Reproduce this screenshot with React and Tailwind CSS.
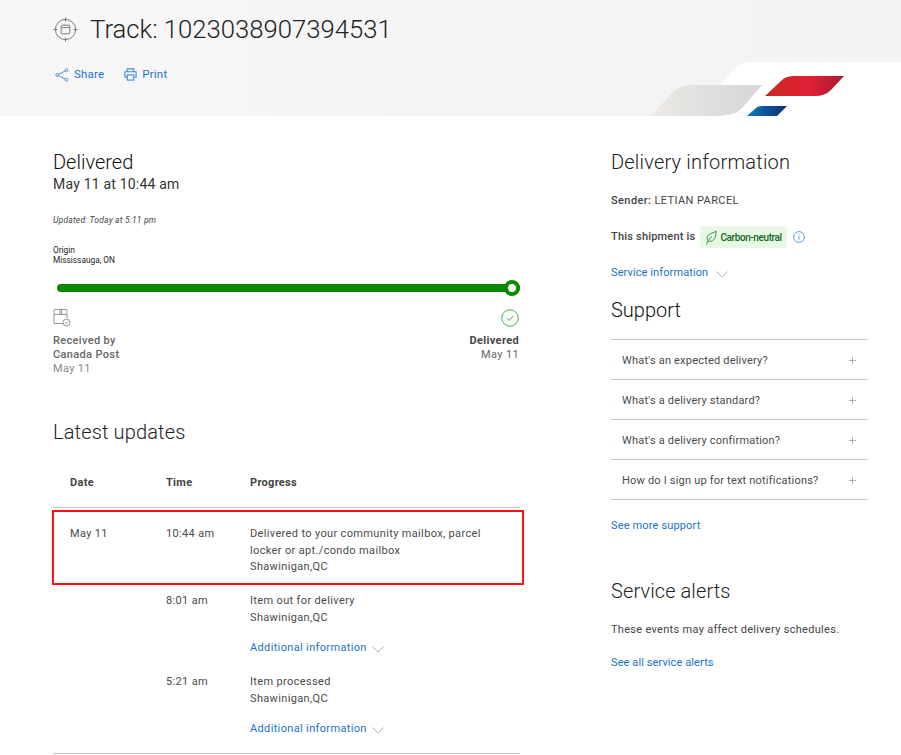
import React from "react";
import { Plus } from "lucide-react";

const blue = "text-[#1a73c9]";

function Logo() {
  return (
    <svg className="absolute right-0 top-0 w-[271px] h-[116px]" viewBox="630 0 271 116">
      <defs>
        <linearGradient id="g" x1="0" x2="1" y1="0" y2="0"><stop offset="0" stopColor="#ece9e6" /><stop offset="1" stopColor="#d6d6d6" /></linearGradient>
        <linearGradient id="r" x1="0" x2="1" y1="0" y2="0"><stop offset="0" stopColor="#c62a1e" /><stop offset="0.55" stopColor="#e21f35" /><stop offset="1" stopColor="#a51d35" /></linearGradient>
        <linearGradient id="b" x1="0" x2="1" y1="0" y2="0"><stop offset="0" stopColor="#0b78c0" /><stop offset="1" stopColor="#0f2f6e" /></linearGradient>
      </defs>
      <path d="M692 116 L731 72 Q740 62 752 62 L901 62 L901 116 Z" fill="#fff" />
      <path d="M650 116 L673 92 Q680 85 690 85 L762 85 L742 108 Q735 115 725 115 L722 116 Z" fill="url(#g)" />
      <path d="M765 96 L781 81 Q785 76 795 76 L844 76 L831 90 Q825 96 815 96 Z" fill="url(#r)" />
      <path d="M747 116 L756 108 Q758 106 762 106 L787 106 L777 116 Z" fill="url(#b)" />
    </svg>
  );
}

function TrackIcon() {
  return (
    <svg width="25" height="25" viewBox="0 0 26 26" fill="none" stroke="#757575" strokeWidth="1">
      <circle cx="13" cy="13" r="10.5" />
      <path d="M13 0.5v4M13 21.5v4M0.5 13h4M21.5 13h4" />
      <rect x="8.5" y="8.5" width="9" height="9" rx="1" />
      <path d="M8.5 11h9" />
    </svg>
  );
}

function ShareIcon() {
  return (
    <svg width="14" height="14" viewBox="0 0 14 14" fill="none" stroke="#4a90d9" strokeWidth="1">
      <circle cx="11.5" cy="2.3" r="1.4" />
      <circle cx="2.3" cy="7" r="1.4" />
      <circle cx="11.5" cy="11.7" r="1.4" />
      <path d="M3.6 6.3l6.7-3.4M3.6 7.7l6.7 3.4" />
    </svg>
  );
}

function PrintIcon() {
  return (
    <svg width="13" height="13" viewBox="0 0 14 14" fill="none" stroke="#3d8ad6" strokeWidth="1.2">
      <path d="M3.5 4V1h7v3" />
      <path d="M3.5 10H1V4h12v6h-2.5" />
      <rect x="3.5" y="7.5" width="7" height="5.5" />
    </svg>
  );
}

function BoxIcon() {
  return (
    <svg width="18" height="18" viewBox="0 0 18 18" fill="none" stroke="#8a8a8a" strokeWidth="0.9" className="overflow-visible">
      <path d="M10 14.5H1V1.5a1 1 0 0 1 1-1h11a1 1 0 0 1 1 1V9" />
      <path d="M1 5.5h13M7 .5v5M8.5 .5v5" />
      <circle cx="13.5" cy="13.5" r="3.5" fill="#fff" />
      <path d="M12 13.5l1.2 1.2 2-2.2" />
    </svg>
  );
}

function CheckCircle() {
  return (
    <svg width="18" height="18" viewBox="0 0 18 18" fill="none" stroke="#4caf50" strokeWidth="1">
      <circle cx="9" cy="9" r="8.2" />
      <path d="M6 9.3l2.2 2.2 4-4.5" stroke="#3f9c46" />
    </svg>
  );
}

function Leaf() {
  return (
    <svg width="12" height="15" viewBox="0 0 12 15" fill="none" stroke="#3c8c3c" strokeWidth="1">
      <path d="M11 1C11 8 9 11 4.5 11.5 1.5 11 1.5 7 3.5 5 5.5 3 9 3 11 1Z" />
      <path d="M1.5 14.5C2.5 11 4.5 8.5 7 6.5" />
    </svg>
  );
}

function Info() {
  return (
    <svg width="12" height="12" viewBox="0 0 12 12" fill="none" stroke="#4a90d9" strokeWidth="0.9">
      <circle cx="6" cy="6" r="5.4" />
      <path d="M6 5.2v3.4M6 3.2v1" />
    </svg>
  );
}

function Chev() {
  return (
    <svg width="12" height="7" viewBox="0 0 12 7" fill="none" stroke="#9fb2d2" strokeWidth="1" className="mt-[2px]">
      <path d="M0.5 0.5L6 6l5.5-5.5" />
    </svg>
  );
}

function Row({ date, time, lines, more, highlight }) {
  return (
    <div className={highlight ? "-ml-[1px] -mr-[4px] border-2 border-[#ff1010] flex pt-[14px] h-[75px] mt-[2px]" : "flex h-[81px] pt-[8px]"}>
      <div className={highlight ? "w-[112px] pl-[16px] shrink-0" : "w-[113px] pl-[17px] shrink-0"}>{date}</div>
      <div className="w-[84px] shrink-0">{time}</div>
      <div className="flex-1">
        {lines.map((l) => (
          <div key={l} className="h-[16.5px] leading-[16.5px]">{l}</div>
        ))}
        {more && (
          <div className={`mt-[14px] flex items-center gap-[5px] ${blue} leading-[16px]`}>
            Additional information
            <Chev />
          </div>
        )}
      </div>
    </div>
  );
}

function Faq({ q }) {
  return (
    <div className="h-[40px] border-b border-[#c8c8c8] flex items-center justify-between pl-[11px] pr-[10px] text-[11px] tracking-[0.2px] text-[#4a4a4a]">
      <span className="pt-[4px]">{q}</span>
      <Plus size={11} strokeWidth={1} className="text-[#666] mt-[2px]" />
    </div>
  );
}

export default function App() {
  return (
    <div className="w-[901px] h-[755px] overflow-hidden bg-white text-[#333] font-['Roboto',sans-serif]">
      <header className="relative h-[116px] bg-linear-to-r from-[#f7f7f7] to-[#f3f3f3] pl-[53px] pt-[14px] overflow-hidden">
        <Logo />
        <div className="flex items-center gap-[12px]">
          <TrackIcon />
          <h1 className="text-[25.7px] leading-[30px] font-light text-[#222]">Track: 1023038907394531</h1>
        </div>
        <div className={`mt-[22px] ml-[2px] flex items-center text-[11.5px] tracking-[0.2px] ${blue}`}>
          <ShareIcon />
          <span className="ml-[5px] mr-[20px]">Share</span>
          <PrintIcon />
          <span className="ml-[5px]">Print</span>
        </div>
      </header>

      <main className="flex pl-[53px]">
        <section className="w-[467px] shrink-0 pt-[35px]">
          <div className="text-[20px] leading-[23px] font-light text-[#111]">Delivered</div>
          <div className="text-[14px] leading-[20px] tracking-[0.2px] text-[#333]">May 11 at 10:44 am</div>
          <div className="text-[8.5px] italic leading-[10px] mt-[21px] text-[#444] tracking-[0.2px]">Updated: Today at 5:11 pm</div>
          <div className="text-[8.3px] leading-[10px] mt-[20px] text-[#222]">Origin<br />Mississauga, ON</div>
          <div className="relative ml-[4px] mt-[19px] h-[8px] w-[463px] bg-[#0a8a00] rounded-full">
            <div className="absolute right-0 top-[-4px] w-[16px] h-[16px] rounded-full border-[4px] border-[#0a8a00] bg-white" />
          </div>
          <div className="flex justify-between mt-[17px] pr-[1px] text-[11px] leading-[14px] tracking-[0.35px]">
            <div>
              <BoxIcon />
              <div className="mt-[7px] font-medium text-[#666]">Received by<br />Canada Post</div>
              <div className="text-[#888]">May 11</div>
            </div>
            <div className="flex flex-col items-end">
              <CheckCircle />
              <div className="mt-[7px] font-bold text-[#444]">Delivered</div>
              <div className="text-[#666]">May 11</div>
            </div>
          </div>

          <h2 className="mt-[44px] text-[20px] leading-[24px] font-light text-[#222] tracking-[0.15px]">Latest updates</h2>
          <div className="flex mt-[27px] h-[37px] border-b border-[#c8c8c8] text-[11px] font-bold text-[#444] tracking-[0.3px] pt-[5px] leading-[14px]">
            <div className="w-[113px] pl-[17px]">Date</div>
            <div className="w-[84px]">Time</div>
            <div>Progress</div>
          </div>
          <div className="text-[11px] text-[#4a4a4a] tracking-[0.35px]">
            <Row highlight date="May 11" time="10:44 am" lines={["Delivered to your community mailbox, parcel", "locker or apt./condo mailbox", "Shawinigan,QC"]} />
            <Row time="8:01 am" lines={["Item out for delivery", "Shawinigan,QC"]} more />
            <Row time="5:21 am" lines={["Item processed", "Shawinigan,QC"]} more />
          </div>
          <div className="mt-[6px] border-t border-[#c8c8c8]" />
        </section>

        <aside className="w-[257px] ml-[91px] shrink-0 pt-[35px]">
          <h2 className="text-[20px] leading-[23px] font-light text-[#222] tracking-[0.2px]">Delivery information</h2>
          <div className="mt-[20px] text-[11px] leading-[14px] tracking-[0.4px] text-[#444]"><span className="font-medium">Sender:</span> LETIAN PARCEL</div>
          <div className="mt-[18px] flex items-center text-[11px] font-medium tracking-[0.2px] text-[#444]">
            This shipment is
            <span className="ml-[5px] h-[22px] px-[5px] rounded-[4px] bg-[#e7f9e5] flex items-center gap-[3px] text-[10px] font-medium tracking-[-0.4px] text-[#14651a]">
              <Leaf />Carbon-neutral
            </span>
            <span className="ml-[6px] flex"><Info /></span>
          </div>
          <div className={`mt-[17px] flex items-center gap-[8px] text-[11px] leading-[16px] tracking-[0.1px] ${blue}`}>
            Service information
            <Chev />
          </div>
          <h2 className="mt-[17px] text-[20px] leading-[24px] font-light text-[#111]">Support</h2>
          <div className="mt-[17px] border-t border-[#c8c8c8]">
            <Faq q="What's an expected delivery?" />
            <Faq q="What's a delivery standard?" />
            <Faq q="What's a delivery confirmation?" />
            <Faq q="How do I sign up for text notifications?" />
          </div>
          <div className={`mt-[19px] text-[11px] leading-[14px] tracking-[0.15px] ${blue}`}>See more support</div>
          <h2 className="mt-[46px] text-[20px] leading-[24px] text-[#222] font-light tracking-[0.1px]">Service alerts</h2>
          <div className="mt-[20px] text-[11px] leading-[14px] tracking-[0.3px] text-[#444]">These events may affect delivery schedules.</div>
          <div className={`mt-[19px] text-[11px] leading-[14px] tracking-[0.1px] ${blue}`}>See all service alerts</div>
        </aside>
      </main>
    </div>
  );
}
